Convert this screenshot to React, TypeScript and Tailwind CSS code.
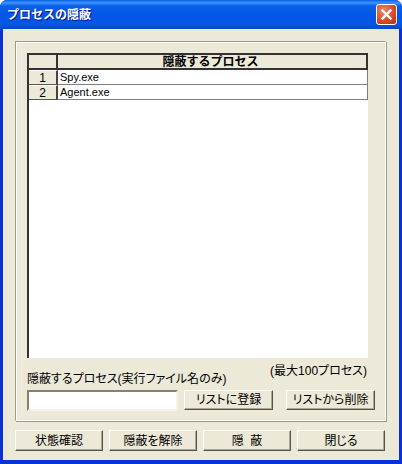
const font = "[font-family:'Liberation_Sans','Noto_Sans_CJK_JP',sans-serif]";

function Btn({ label, className }: { label: string; className: string }) {
  return (
    <button className={`flex items-center justify-center bg-[#ece9d8] border border-t-white border-l-white border-r-[#55534a] border-b-[#55534a] shadow-[inset_-1px_-1px_0_#aca899] text-[12px] leading-none text-black whitespace-pre [font-feature-settings:'palt'] ${className}`}>
      {label}
    </button>
  );
}

function Row({ n, name }: { n: number; name: string }) {
  return (
    <div className="flex h-[15px]">
      <div className="w-[29px] flex items-center justify-center bg-[#ece9d8] border-r-2 border-b border-r-[#444] border-b-[#555] text-[12px] leading-none border-t border-t-white">{n}</div>
      <div className="flex-1 flex items-center pl-[2px] bg-white border-r border-b border-[#808080] text-[11px] leading-none">{name}</div>
    </div>
  );
}

export default function App() {
  return (
    <div className={`w-[402px] h-[464px] flex flex-col bg-[#0831d9] overflow-hidden rounded-t-[7px] text-black ${font}`}>
      <div className="h-[29px] shrink-0 flex items-center justify-between pl-[7px] pr-[5px] bg-[linear-gradient(180deg,#0a5fe8_0%,#3d95ff_10%,#0a5fe8_20%,#0355e6_55%,#0358e8_80%,#0a49c4_100%)]">
        <span className="text-white font-bold text-[12px] leading-none [text-shadow:1px_1px_0_#0f1089]">プロセスの隠蔽</span>
        <div className="w-[21px] h-[21px] rounded-[3px] border border-white bg-[radial-gradient(circle_at_35%_30%,#e8886a,#d4451f_65%,#b5300f)] flex items-center justify-center">
          <svg width="13" height="13" viewBox="0 0 13 13">
            <path d="M2.5 2.5 L10.5 10.5 M10.5 2.5 L2.5 10.5" stroke="#fff" strokeWidth="2.4" strokeLinecap="square" fill="none" />
          </svg>
        </div>
      </div>

      <div className="flex-1 mx-[3px] mb-[4px] bg-[#ece9d8] pt-[12px] pl-[12px] pr-[13px] flex flex-col">
        <div className="w-[371px] h-[380px] border border-t-[#9c9a8f] border-l-[#9c9a8f] border-r-white border-b-white shadow-[1px_1px_0_#9c9a8f,inset_1px_1px_0_#fff] pt-[11px] pl-[11px] flex flex-col">
          <div className="w-[341px] h-[305px] bg-white border-t-2 border-l-2 border-[#333] flex flex-col">
            <div className="flex h-[15px] bg-[#ece9d8] border-b-2 border-[#333]">
              <div className="w-[29px] border-r-2 border-[#333]" />
              <div className="flex-1 flex items-center justify-center pr-[3px] border-r-2 border-[#333] font-bold text-[12px] leading-none">隠蔽するプロセス</div>
            </div>
            <Row n={1} name="Spy.exe" />
            <Row n={2} name="Agent.exe" />
          </div>

          <div className="flex justify-end w-[340px] h-[11px] mt-[7px] text-[12px] leading-none [font-feature-settings:'palt']">(最大100プロセス)</div>
          <div className="h-[14px] mt-[-3px] text-[12px] leading-none [font-feature-settings:'palt']">隠蔽するプロセス(実行ファイル名のみ)</div>

          <div className="flex mt-[3px]">
            <div className="w-[151px] h-[21px] bg-white border-2 border-t-[#85836f] border-l-[#85836f] border-r-[#f4f2e8] border-b-[#f4f2e8]" />
            <Btn label="リストに登録" className="w-[89px] h-[20px] ml-[6px]" />
            <Btn label="リストから削除" className="w-[89px] h-[20px] ml-[13px]" />
          </div>
        </div>

        <div className="flex mt-[9px] gap-[6px]">
          <Btn label="状態確認" className="w-[88px] h-[21px]" />
          <Btn label="隠蔽を解除" className="w-[88px] h-[21px]" />
          <Btn label={"隠\u00a0\u00a0蔽"} className="w-[88px] h-[21px]" />
          <Btn label="閉じる" className="w-[88px] h-[21px]" />
        </div>
      </div>
    </div>
  );
}
